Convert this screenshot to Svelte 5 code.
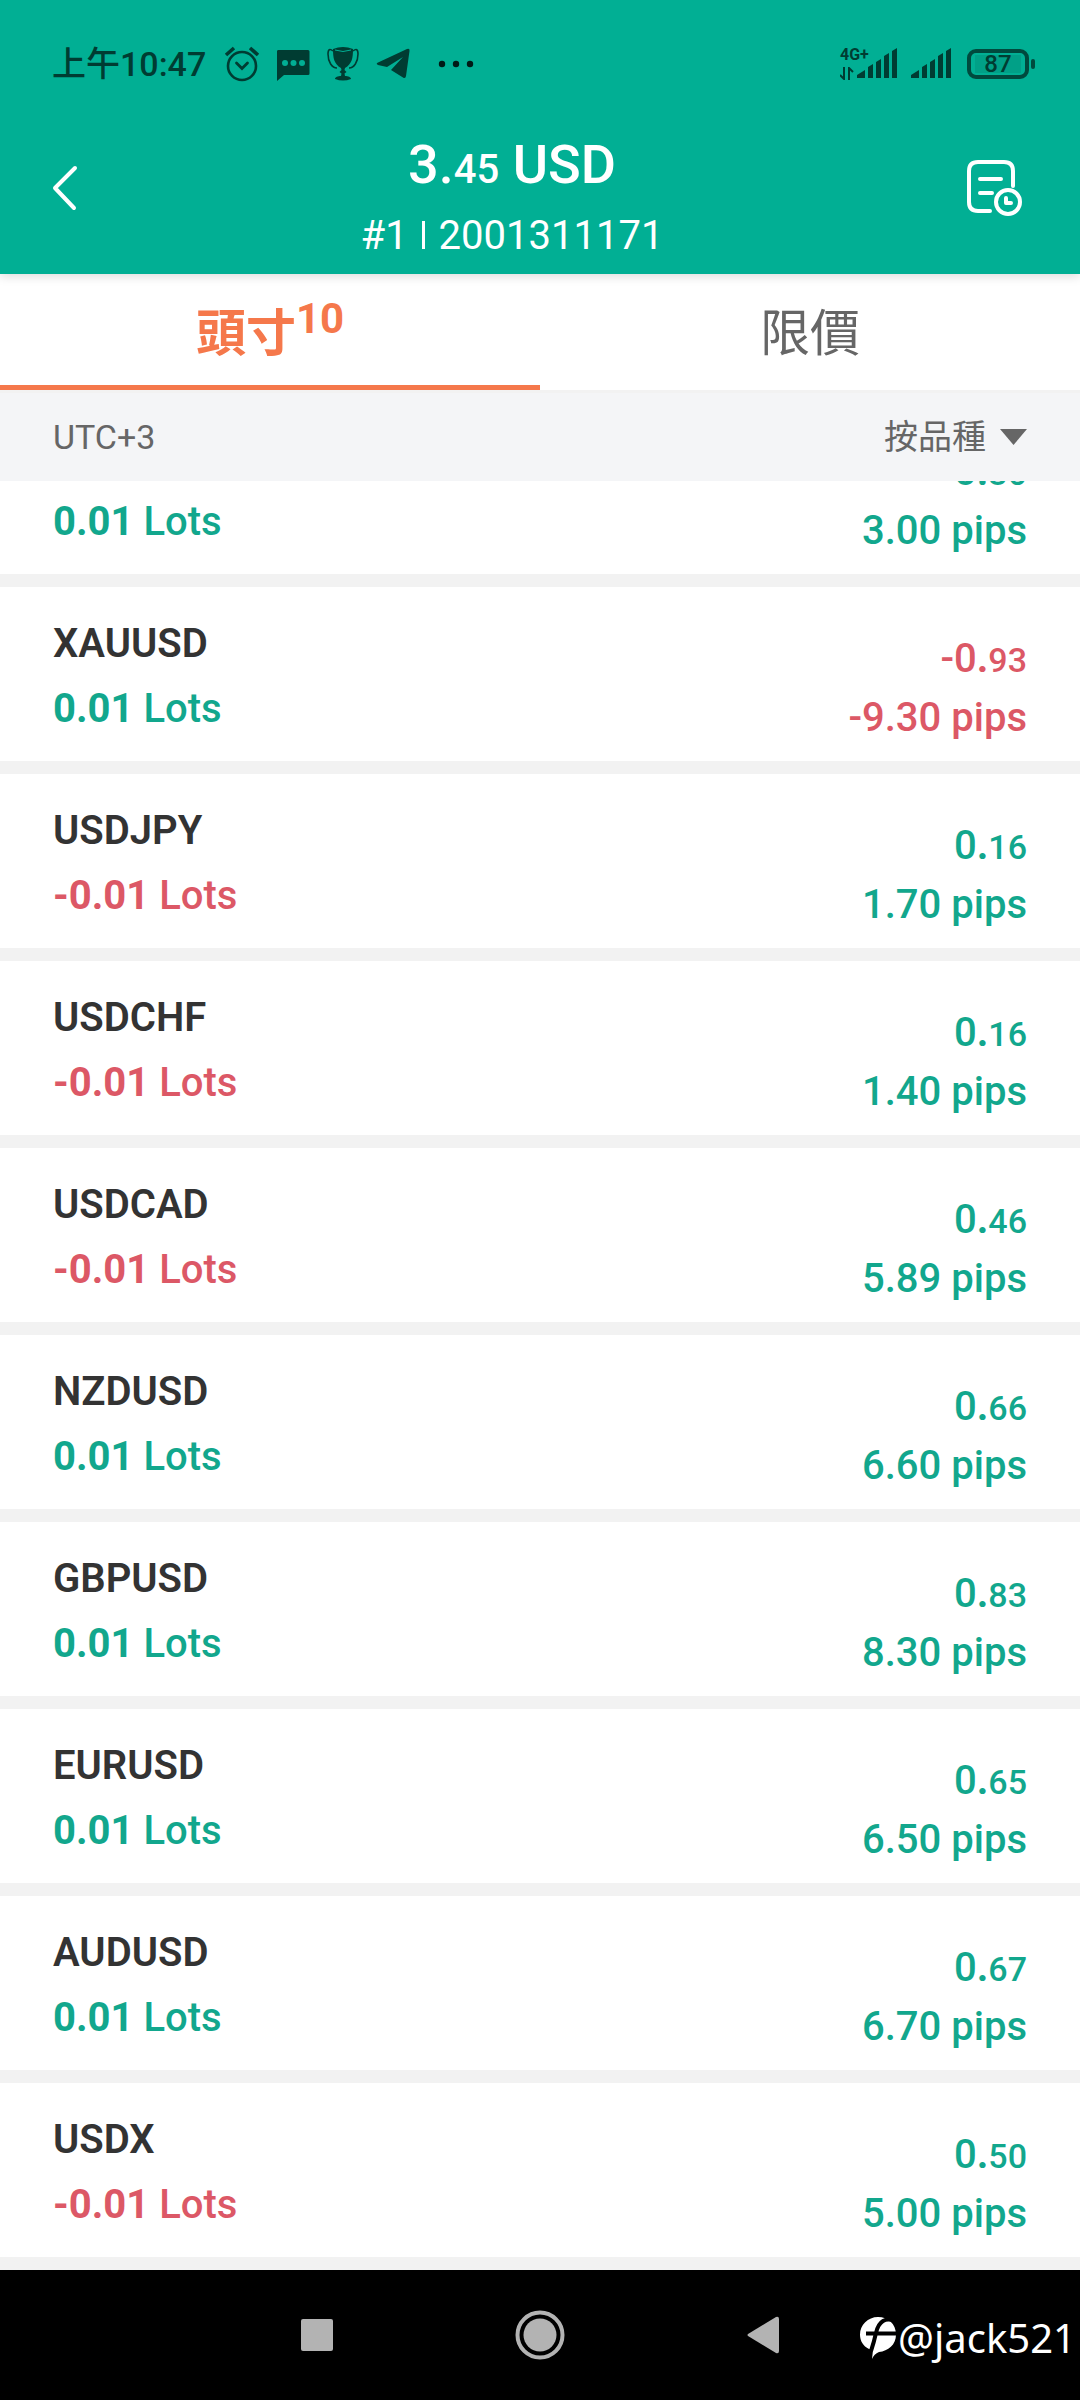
<script>
  let activeTab = $state("positions");
  let sortBy = $state("symbol");

  const positions = [
    { symbol: "", lots: "0.01", whole: "0", cents: "30", pips: "3.00" },
    { symbol: "XAUUSD", lots: "0.01", whole: "-0", cents: "93", pips: "-9.30" },
    { symbol: "USDJPY", lots: "-0.01", whole: "0", cents: "16", pips: "1.70" },
    { symbol: "USDCHF", lots: "-0.01", whole: "0", cents: "16", pips: "1.40" },
    { symbol: "USDCAD", lots: "-0.01", whole: "0", cents: "46", pips: "5.89" },
    { symbol: "NZDUSD", lots: "0.01", whole: "0", cents: "66", pips: "6.60" },
    { symbol: "GBPUSD", lots: "0.01", whole: "0", cents: "83", pips: "8.30" },
    { symbol: "EURUSD", lots: "0.01", whole: "0", cents: "65", pips: "6.50" },
    { symbol: "AUDUSD", lots: "0.01", whole: "0", cents: "67", pips: "6.70" },
    { symbol: "USDX", lots: "-0.01", whole: "0", cents: "50", pips: "5.00" },
  ];

  const isLoss = (value) => value.startsWith("-");
</script>

{#snippet signal()}
  <svg class="signal" width="40" height="30" viewBox="0 0 40 30" aria-hidden="true">
    <path d="M0 30v-3l8-5v8zM11 30V19l5-3v14zM19 30V14l5-3v19zM27 30V8l5-3v25zM35 30V3l5-3v30z" />
  </svg>
{/snippet}

<div class="screen">
  <header>
    <div class="status">
      <span class="time">上午10:47</span>
      <svg width="36" height="36" viewBox="0 0 36 36" fill="none" stroke="currentColor" aria-hidden="true">
        <circle cx="18" cy="20" r="14" stroke-width="2.6" />
        <path d="M12.500 17l5.500 5.500 5.500-5.500" stroke-width="2.800" stroke-linecap="round" />
        <path d="M2 9l8-7M34 9l-8-7" stroke-width="3.600" />
      </svg>
      <svg width="34" height="34" viewBox="0 0 34 34" fill="currentColor" aria-hidden="true">
        <path d="M2 3h30q1.500 0 1.500 1.500v22q0 1.500-1.500 1.500H8l-7 6V4.500Q1 3 2 3z" />
        <g fill="#01af94">
          <circle cx="9" cy="16" r="3" />
          <circle cx="17.500" cy="16" r="3" />
          <circle cx="26" cy="16" r="3" />
        </g>
      </svg>
      <svg class="trophy" width="32" height="36" viewBox="0 0 32 36" aria-hidden="true">
        <path
          fill="currentColor"
          d="M6 3Q16-1 26 3c0 9-1 15-8 19l-.5 2 2 2-2 1.500.5 2.500c3 0 6 1 6 3q-8 3-16 0c0-2 3-3 6-3l.5-2.500-2-1.500 2-2-.5-2C7 18 6 12 6 3z"
        />
        <path
          fill="none"
          stroke="currentColor"
          stroke-width="1.600"
          d="M6 5Q1 1 1 8c0 8 4 14 9 14M26 5q5-4 5 3c0 8-4 14-9 14"
        />
        <path fill="none" stroke="#01af94" d="M8 4q8 3 16 0" />
      </svg>
      <svg width="34" height="32" viewBox="0 0 34 32" fill="currentColor" aria-hidden="true">
        <path d="M1 15L31 1q3-1 2.500 2L30 28q-.5 3-3 1.500L15 22 27 9 11 19l-9-2q-2-1-1-2z" />
      </svg>
      <svg class="more" width="36" height="8" viewBox="0 0 36 8" aria-hidden="true">
        <circle cx="4" cy="4" r="3.200" />
        <circle cx="18" cy="4" r="3.200" />
        <circle cx="32" cy="4" r="3.200" />
      </svg>

      <div class="network">
        <div class="carrier">
          <span class="gen">4G+</span>
          <svg width="14" height="13" viewBox="0 0 14 13" aria-hidden="true">
            <path d="M4 0v12L0 8M9 13V1l4 4" fill="none" stroke="currentColor" stroke-width="2" />
          </svg>
        </div>
        {@render signal()}
        <div class="second">{@render signal()}</div>
      </div>
      <div class="battery"><span>87</span></div>
    </div>

    <div class="title-bar">
      <button class="back" aria-label="返回">
        <svg width="26" height="46" viewBox="0 0 26 46" aria-hidden="true">
          <path d="M23 3L3 23l19 20" />
        </svg>
      </button>
      <div class="account">
        <h1>3.<small>45</small> USD</h1>
        <p>#1 <i></i> 2001311171</p>
      </div>
      <button class="history" aria-label="歷史">
        <svg width="56" height="56" viewBox="0 0 56 56" aria-hidden="true">
          <path d="M46 26V11q0-9-9-9H11q-9 0-9 9v31q0 9 9 9h12M13 19h21M13 33h12" />
          <circle cx="41" cy="42" r="12" />
          <path d="M39 38v5h5" />
        </svg>
      </button>
    </div>
  </header>

  <div class="tabs" role="tablist">
    <button role="tab" aria-selected={activeTab === "positions"} class:active={activeTab === "positions"} onclick={() => (activeTab = "positions")}>
      頭寸<span class="count">10</span>
    </button>
    <button role="tab" aria-selected={activeTab === "limits"} class:active={activeTab === "limits"} onclick={() => (activeTab = "limits")}>
      限價
    </button>
  </div>

  <div class="filter">
    <span>UTC+3</span>
    <label>
      <select bind:value={sortBy} aria-label="排序">
        <option value="symbol">按品種</option>
      </select>
      <svg width="27" height="16" viewBox="0 0 27 16" aria-hidden="true"><path d="M0 0h27L13.500 16z" /></svg>
    </label>
  </div>

  <main>
    <ul>
      {#each positions as item}
        <li>
          <div class="left">
            <div class="symbol">{item.symbol}</div>
            <div class="lots" class:loss={isLoss(item.lots)}><b>{item.lots}</b> Lots</div>
          </div>
          <div class="right" class:loss={isLoss(item.pips)}>
            <div>{item.whole}<b>.</b><small>{item.cents}</small></div>
            <div>{item.pips} pips</div>
          </div>
        </li>
      {/each}
    </ul>
  </main>

  <nav>
    <button aria-label="最近">
      <svg width="32" height="32" viewBox="0 0 32 32"><rect width="32" height="32" rx="2" /></svg>
    </button>
    <button aria-label="主頁">
      <svg width="50" height="50" viewBox="0 0 50 50">
        <circle cx="25" cy="25" r="16.500" />
        <circle cx="25" cy="25" r="22.500" fill="none" stroke="#b3b3b3" stroke-width="4" />
      </svg>
    </button>
    <button aria-label="返回">
      <svg width="32" height="38" viewBox="0 0 32 38"><path d="M1 18L29 1q3-1 3 2v32q0 3-3 2L1 20q-1-1 0-2z" /></svg>
    </button>
    <div class="watermark">
      <svg width="36" height="42" viewBox="0 0 36 42" aria-hidden="true">
        <path d="M18 0c10 0 18 7 18 17.500S28 34 19 35q-5 2-7 7l1-9-4-1C3 29 0 24 0 17.500 0 8 8 0 18 0z" />
        <path class="mark" d="M34 4q-6-3-11 0-5 3-7 12-2 9-5 18M6 16.500h30" />
      </svg>
      <span>@jack521</span>
    </div>
  </nav>
</div>

<style>
  :global(body) {
    margin: 0;
    background: #fff;
  }

  .screen {
    font-family: Roboto, "Noto Sans CJK TC", sans-serif;
    color: #333;
  }

  button {
    border: none;
    background: none;
    padding: 0;
    font: inherit;
    color: inherit;
    cursor: pointer;
  }

  svg {
    display: block;
    flex: none;
  }

  header {
    position: relative;
    background: #01af94;
    box-shadow: 0 2px 10px rgba(0, 0, 0, 0.15);
  }

  .status {
    display: flex;
    align-items: center;
    gap: 16px;
    height: 128px;
    padding: 0 45px 0 52px;
    color: #003c32;
  }

  .time {
    font-size: 34px;
    font-weight: 500;
    line-height: 40px;
    margin-right: 2px;
  }

  .trophy {
    margin: 0 1px;
  }

  .more {
    margin-left: 12px;
    fill: #001a16;
  }

  .network {
    display: flex;
    margin-left: auto;
  }

  .carrier {
    display: flex;
    flex-direction: column;
    justify-content: space-between;
    width: 17px;
    height: 32px;
  }

  .gen {
    font-size: 16px;
    font-weight: 700;
    line-height: 14px;
  }

  .signal {
    fill: currentColor;
  }

  .second {
    margin-left: 14px;
  }

  .battery {
    position: relative;
    display: flex;
    align-items: center;
    justify-content: center;
    box-sizing: border-box;
    width: 62px;
    height: 30px;
    border: 4px solid #004a3e;
    border-radius: 9px;
    font-size: 24px;
    font-weight: 500;
    margin-right: 6px;
  }

  .battery span {
    padding: 0 9px;
    background: #01a087;
    line-height: 18px;
  }

  .battery::after {
    content: "";
    position: absolute;
    right: -10px;
    top: 6px;
    width: 4px;
    height: 10px;
    border-radius: 2px;
    background: #004a3e;
  }

  .title-bar {
    display: flex;
    align-items: center;
    height: 146px;
    color: #fff;
  }

  .title-bar svg {
    fill: none;
    stroke: #fff;
    stroke-width: 4;
    stroke-linecap: round;
    stroke-linejoin: round;
  }

  .back {
    width: 54px;
    margin-left: 52px;
    padding-bottom: 26px;
  }

  .history {
    width: 56px;
    margin: 0 57px 0 49px;
    padding-bottom: 26px;
  }

  .account {
    flex: 1;
    text-align: center;
    padding-bottom: 2px;
  }

  h1 {
    margin: 0;
    font-size: 54px;
    font-weight: 500;
    line-height: 72px;
  }

  h1 small {
    font-size: 40px;
    line-height: 1;
  }

  .account p {
    margin: 0;
    font-size: 40px;
    line-height: 70px;
  }

  .account i {
    display: inline-block;
    width: 3px;
    height: 28px;
    margin: 0 4px;
    background: #fff;
  }

  .tabs {
    display: grid;
    grid-template-columns: 1fr 1fr;
  }

  .tabs button {
    height: 116px;
    box-sizing: border-box;
    padding-top: 8px;
    border-bottom: 5px solid transparent;
    font-size: 50px;
    line-height: 72px;
    color: #666;
  }

  .tabs .active {
    border-color: #f5784b;
    color: #f5784b;
    font-weight: 700;
  }

  .count {
    font-size: 42px;
    line-height: 1;
    vertical-align: 18px;
  }

  .filter {
    display: flex;
    align-items: center;
    justify-content: space-between;
    height: 88px;
    padding: 0 53px;
    border-top: 3px solid #f2f2f2;
    background: #f4f5f7;
    font-size: 34px;
    color: #666;
  }

  .filter label {
    display: flex;
    align-items: center;
    gap: 14px;
  }

  .filter svg {
    fill: #666;
  }

  select {
    appearance: none;
    border: none;
    background: none;
    padding: 0;
    font: inherit;
    color: inherit;
  }

  main {
    overflow: hidden;
  }

  /* list is scrolled part of the way through its first row */
  ul {
    list-style: none;
    margin: -81px 0 0;
    padding: 0;
  }

  li {
    display: flex;
    justify-content: space-between;
    padding: 0 53px;
    border-bottom: 13px solid #f2f2f2;
    font-size: 40px;
    font-weight: 500;
    color: #12a78d;
  }

  .left {
    padding: 24px 0 20px;
    line-height: 65px;
  }

  .symbol {
    height: 65px;
    font-weight: 600;
    color: #333;
  }

  .right {
    padding-top: 42px;
    line-height: 59px;
    text-align: right;
  }

  .right small {
    font-size: 34px;
    line-height: 1;
  }

  .loss {
    color: #dc5866;
  }

  nav {
    position: relative;
    display: grid;
    grid-template-columns: repeat(3, 1fr);
    height: 130px;
    padding: 0 19%;
    background: #000;
  }

  nav button {
    display: flex;
    align-items: center;
    justify-content: center;
    fill: #b3b3b3;
  }

  .watermark {
    position: absolute;
    right: 4px;
    bottom: 38px;
    display: flex;
    align-items: center;
    gap: 2px;
    color: #fff;
    font-family: "Noto Sans", sans-serif;
    font-size: 40px;
    line-height: 48px;
  }

  .watermark svg {
    fill: #fff;
  }

  .watermark .mark {
    fill: none;
    stroke: #000;
    stroke-width: 4;
  }
</style>
